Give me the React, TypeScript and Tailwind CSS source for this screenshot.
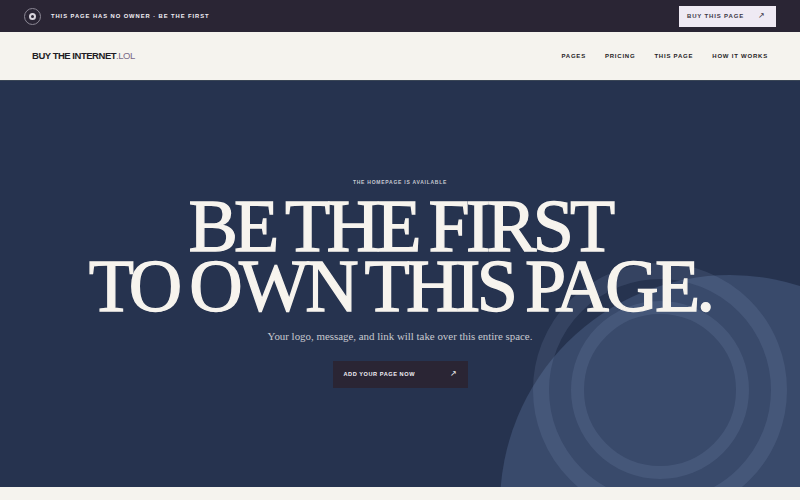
const sans = "font-['Liberation_Sans',Arial,sans-serif]";

export default function App() {
    return (
        <div className={`w-[800px] h-[500px] overflow-hidden flex flex-col bg-[#f5f3ee] ${sans}`}>
            {/* Top strip */}
            <div className="h-8 shrink-0 bg-[#2a2534] flex items-center justify-between pl-6 pr-6">
                <div className="flex items-center gap-[10px]">
                    <div className="w-[17px] h-[17px] rounded-full border border-[#8b8794] flex items-center justify-center">
                        <div className="w-[7px] h-[7px] rounded-full border-[2px] border-[#d8d4dc]"></div>
                    </div>
                    <span className="text-[5.8px] font-bold tracking-[0.163em] text-[#f2eff5]">THIS PAGE HAS NO OWNER · BE THE FIRST</span>
                </div>
                <button className="w-[97px] h-[21px] bg-[#efeaf4] flex items-center justify-between pl-2 pr-2 text-[#3b3545]">
                    <span className="text-[6px] font-bold tracking-[0.14em]">BUY THIS PAGE</span>
                    <span className="text-[8px] leading-none mr-[3px]">↗</span>
                </button>
            </div>

            {/* Nav */}
            <div className="h-[49px] shrink-0 bg-[#f5f3ee] border-b border-[#3a4656] flex items-center justify-between pl-8 pr-8">
                <div className="text-[9.5px] font-bold tracking-[-0.05em] text-[#1f1c24]">
                    BUY THE INTERNET<span className="font-normal text-[#7b6a88]">.LOL</span>
                </div>
                <div className="flex items-center gap-[19px] text-[6px] font-bold tracking-[0.13em] text-[#1f1c24]">
                    <span>PAGES</span>
                    <span>PRICING</span>
                    <span>THIS PAGE</span>
                    <span>HOW IT WORKS</span>
                </div>
            </div>

            {/* Hero */}
            <div className="relative h-[406px] shrink-0 bg-[#26334f] overflow-hidden flex flex-col items-center pt-[98px]">
                <div className="absolute left-[500px] top-[194px] w-[460px] h-[460px] rounded-full bg-[#394a6b]"></div>
                <div className="absolute left-[533px] top-[182px] w-[254px] h-[254px] rounded-full border-[16px] border-[#8ea2cc]/15"></div>
                <div className="absolute left-[571px] top-[220px] w-[178px] h-[178px] rounded-full border-[13px] border-[#8ea2cc]/15"></div>

                <div className="relative flex flex-col items-center">
                    <div className="text-[5px] font-bold tracking-[0.15em] text-[#c5c8d0]">THE HOMEPAGE IS AVAILABLE</div>
                    <h1 className="mt-[9px] text-center font-['Liberation_Serif','Times_New_Roman',serif] font-normal text-[74px] leading-[60px] tracking-[-0.05em] [word-spacing:-4px] [-webkit-text-stroke:1.3px_#f7f4ee] text-[#f7f4ee] whitespace-nowrap">
                        BE THE FIRST
                        <br />
                        TO OWN THIS PAGE.
                    </h1>
                    <p className="mt-[12px] font-['Liberation_Serif',serif] text-[10.9px] text-[#c8cacf]">Your logo, message, and link will take over this entire space.</p>
                    <button className="mt-[17px] w-[135px] h-[27px] bg-[#2a2534] flex items-center justify-between pl-[11px] pr-[11px] text-[#f2eff5]">
                        <span className="text-[5.6px] font-bold tracking-[0.1em]">ADD YOUR PAGE NOW</span>
                        <span className="text-[8px] leading-none">↗</span>
                    </button>
                </div>
            </div>
        </div>
    );
}
